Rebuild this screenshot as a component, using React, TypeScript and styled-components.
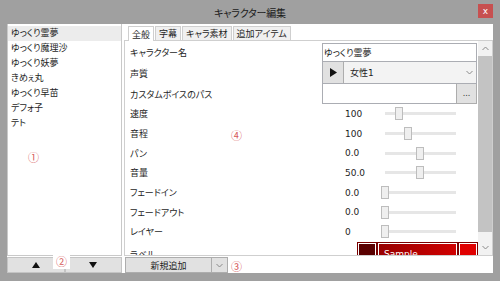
import React from "react";
import styled, { createGlobalStyle } from "styled-components";

const Global = createGlobalStyle`
  html, body { margin: 0; padding: 0; background: #a0a0a0; }
  body {
    font-family: "DejaVu Sans", "Noto Sans CJK JP", sans-serif;
    font-size: 9px;
    color: #1e1e1e;
    font-feature-settings: "palt";
  }
  * { box-sizing: border-box; }
`;

const Window = styled.div`
  position: relative;
  width: 500px;
  height: 281px;
  background: #a0a0a0;
  display: flex;
  flex-direction: column;
  overflow: hidden;
`;

const TitleBar = styled.div`
  height: 24px;
  flex-shrink: 0;
  display: grid;
  grid-template-columns: 1fr auto 1fr;
  align-items: center;
`;

const Title = styled.div`
  grid-column: 2;
  font-family: "Noto Sans CJK JP", sans-serif;
  font-size: 10px;
  color: #1a1a1a;
  letter-spacing: -0.2px;
`;

const CloseButton = styled.div`
  grid-column: 3;
  justify-self: end;
  align-self: start;
  margin: 4px 7px 0 0;
  width: 15px;
  height: 14px;
  background: #c75050;
  color: #fff;
  font-size: 9px;
  line-height: 1;
  display: flex;
  align-items: center;
  justify-content: center;
`;

const Body = styled.div`
  flex: 1;
  min-height: 0;
  margin: 0 7px 8px;
  background: #fff;
  display: flex;
  gap: 2px;
`;

const LeftPanel = styled.div`
  width: 115px;
  display: flex;
  flex-direction: column;
`;

const List = styled.div`
  flex: 1;
  border: 1px solid #c9c9c9;
  border-top: none;
  padding-top: 2px;
`;

const ListItem = styled.div<{ $selected?: boolean }>`
  height: 15px;
  line-height: 15px;
  padding-left: 3px;
  white-space: nowrap;
  background: ${(p) => (p.$selected ? "#ececec" : "transparent")};
`;

const ArrowRow = styled.div`
  height: 17px;
  display: flex;
  padding-top: 1px;
`;

const ArrowButton = styled.div`
  flex: 1;
  background: #e1e1e1;
  border: 1px solid #c4c4c4;
  display: flex;
  align-items: center;
  justify-content: center;
`;

const RightPanel = styled.div`
  flex: 1;
  min-width: 0;
  display: flex;
  flex-direction: column;
`;

const TabStrip = styled.div`
  height: 16px;
  padding: 2px 0 0 4px;
  display: flex;
  align-items: flex-end;
`;

const Tab = styled.div<{ $active?: boolean }>`
  height: ${(p) => (p.$active ? 15 : 14)}px;
  padding: 0 3px;
  margin-right: 1px;
  border: 1px solid #cfcfcf;
  border-bottom: none;
  background: ${(p) => (p.$active ? "#fff" : "#f0f0f0")};
  display: flex;
  align-items: center;
  white-space: nowrap;
  position: relative;
  top: ${(p) => (p.$active ? 1 : 0)}px;
`;

const TabPanel = styled.div`
  flex: 1;
  min-height: 0;
  border: 1px solid #cfcfcf;
  display: flex;
  overflow: hidden;
`;

const Form = styled.div`
  flex: 1;
  min-width: 0;
  padding-top: 2px;
  overflow: hidden;
`;

const Row = styled.div<{ $h: number }>`
  height: ${(p) => p.$h}px;
  display: grid;
  grid-template-columns: 197px 155px;
  align-items: center;
`;

const Label = styled.div`
  padding-left: 5px;
  white-space: nowrap;
`;

const TextBox = styled.div`
  height: 100%;
  border: 1px solid #abadb3;
  display: flex;
  align-items: center;
  padding-left: 1px;
  background: #fff;
`;

const Combo = styled.div`
  height: 100%;
  border: 1px solid #abadb3;
  border-top: none;
  display: flex;
  align-items: stretch;
  background: #f3f3f3;
`;

const PlayButton = styled.div`
  width: 21px;
  background: #e1e1e1;
  border-right: 1px solid #adadad;
  display: flex;
  align-items: center;
  justify-content: center;
`;

const ComboText = styled.div`
  flex: 1;
  display: flex;
  align-items: center;
  padding-left: 6px;
`;

const ComboArrow = styled.div`
  width: 14px;
  display: flex;
  align-items: center;
  justify-content: center;
`;

const PathRow = styled.div`
  height: 100%;
  display: flex;
`;

const PathBox = styled.div`
  flex: 1;
  border: 1px solid #abadb3;
  border-top: none;
  border-right: none;
  background: #fff;
`;

const DotsButton = styled.div`
  width: 21px;
  background: #e1e1e1;
  border: 1px solid #adadad;
  border-top: none;
  display: flex;
  align-items: center;
  justify-content: center;
  font-size: 8px;
  color: #333;
`;

const SliderCell = styled.div`
  display: flex;
  align-items: center;
`;

const Value = styled.div`
  margin-left: 23px;
  width: 36px;
`;

const Slider = styled.div`
  position: relative;
  width: 79px;
  height: 13px;
`;

const Track = styled.div`
  position: absolute;
  left: 4px;
  right: 4px;
  top: 5px;
  height: 3px;
  background: #e6e6e6;
`;

const Thumb = styled.div`
  position: absolute;
  top: 0;
  width: 8px;
  height: 13px;
  background: #efefef;
  border: 1px solid #bdbdbd;
`;

const LastLabel = styled(Label)`
  align-self: start;
  padding-top: 6px;
`;

const ColorCell = styled.div`
  align-self: start;
  margin-top: 1px;
  display: flex;
  gap: 2px;
  padding-left: 36px;
`;

const Swatch = styled.div<{ $w: number; $bg: string }>`
  width: ${(p) => p.$w}px;
  height: 18px;
  background: ${(p) => p.$bg};
  border: 1px solid #fff;
  outline: 1px solid #7a0000;
  color: #fff;
  padding: 5px 0 0 5px;
  font-size: 9px;
`;

const ScrollBar = styled.div`
  width: 14px;
  background: #f2f2f2;
  display: flex;
  flex-direction: column;
`;

const ScrollArrow = styled.div`
  height: 15px;
  display: flex;
  align-items: center;
  justify-content: center;
`;

const ScrollThumb = styled.div`
  height: 176px;
  background: #c3c3c3;
`;

const ScrollSpace = styled.div`
  flex: 1;
`;

const BottomRow = styled.div`
  height: 17px;
  padding: 1px 0 0 1px;
  display: flex;
`;

const AddButton = styled.div`
  width: 87px;
  background: #e1e1e1;
  border: 1px solid #adadad;
  display: flex;
  align-items: center;
  justify-content: center;
`;

const AddDrop = styled.div`
  width: 16px;
  background: #e1e1e1;
  border: 1px solid #adadad;
  border-left: none;
  display: flex;
  align-items: center;
  justify-content: center;
`;

const Annotation = styled.div<{ $bg?: boolean }>`
  position: absolute;
  font-family: "Noto Sans CJK JP", sans-serif;
  font-size: 11px;
  line-height: 1;
  color: #d65a5a;
  background: ${(p) => (p.$bg ? "#fff" : "transparent")};
  padding: ${(p) => (p.$bg ? "2px 3px" : "0")};
`;

const Chevron = ({ up }: { up?: boolean }) => (
  <svg width="7" height="5" viewBox="0 0 7 5">
    <path
      d={up ? "M0.5 4 L3.5 1 L6.5 4" : "M0.5 1 L3.5 4 L6.5 1"}
      stroke="#8a8a8a"
      strokeWidth="1"
      fill="none"
    />
  </svg>
);

const Tri = ({ dir }: { dir: "up" | "down" | "right" }) => {
  const d =
    dir === "up"
      ? "M0 6 L4 0 L8 6 Z"
      : dir === "down"
      ? "M0 0 L8 0 L4 6 Z"
      : "M0 0 L7 4.5 L0 9 Z";
  const w = dir === "right" ? 7 : 8;
  const h = dir === "right" ? 9 : 6;
  return (
    <svg width={w} height={h} viewBox={`0 0 ${w} ${h}`}>
      <path d={d} fill="#111" />
    </svg>
  );
};

const characters = [
  "ゆっくり霊夢",
  "ゆっくり魔理沙",
  "ゆっくり妖夢",
  "きめぇ丸",
  "ゆっくり早苗",
  "デフォ子",
  "テト",
];

const sliders = [
  { label: "速度", value: "100", pos: 14 },
  { label: "音程", value: "100", pos: 23 },
  { label: "パン", value: "0.0", pos: 35 },
  { label: "音量", value: "50.0", pos: 35 },
  { label: "フェードイン", value: "0.0", pos: 0 },
  { label: "フェードアウト", value: "0.0", pos: 0 },
  { label: "レイヤー", value: "0", pos: 0 },
];

export default function App() {
  return (
    <>
      <Global />
      <Window>
        <TitleBar>
          <Title>キャラクター編集</Title>
          <CloseButton>x</CloseButton>
        </TitleBar>
        <Body>
          <LeftPanel>
            <List>
              {characters.map((c, i) => (
                <ListItem key={c} $selected={i === 0}>
                  {c}
                </ListItem>
              ))}
            </List>
            <ArrowRow>
              <ArrowButton>
                <Tri dir="up" />
              </ArrowButton>
              <ArrowButton>
                <Tri dir="down" />
              </ArrowButton>
            </ArrowRow>
          </LeftPanel>
          <RightPanel>
            <TabStrip>
              <Tab $active>全般</Tab>
              <Tab>字幕</Tab>
              <Tab>キャラ素材</Tab>
              <Tab>追加アイテム</Tab>
            </TabStrip>
            <TabPanel>
              <Form>
                <Row $h={19}>
                  <Label>キャラクター名</Label>
                  <TextBox>ゆっくり霊夢</TextBox>
                </Row>
                <Row $h={22}>
                  <Label>声質</Label>
                  <Combo>
                    <PlayButton>
                      <Tri dir="right" />
                    </PlayButton>
                    <ComboText>女性1</ComboText>
                    <ComboArrow>
                      <Chevron />
                    </ComboArrow>
                  </Combo>
                </Row>
                <Row $h={20}>
                  <Label>カスタムボイスのパス</Label>
                  <PathRow>
                    <PathBox />
                    <DotsButton>...</DotsButton>
                  </PathRow>
                </Row>
                {sliders.map((s) => (
                  <Row $h={19.7} key={s.label}>
                    <Label>{s.label}</Label>
                    <SliderCell>
                      <Value>{s.value}</Value>
                      <Slider>
                        <Track />
                        <Thumb style={{ left: s.pos }} />
                      </Slider>
                    </SliderCell>
                  </Row>
                ))}
                <Row $h={24}>
                  <LastLabel>ラベル</LastLabel>
                  <ColorCell>
                    <Swatch $w={18} $bg="#5a0000" />
                    <Swatch
                      $w={79}
                      $bg="linear-gradient(to right, #980000, #d00000)"
                    >
                      Sample
                    </Swatch>
                    <Swatch $w={18} $bg="#e00000" />
                  </ColorCell>
                </Row>
              </Form>
              <ScrollBar>
                <ScrollArrow>
                  <Chevron up />
                </ScrollArrow>
                <ScrollThumb />
                <ScrollSpace />
                <ScrollArrow>
                  <Chevron />
                </ScrollArrow>
              </ScrollBar>
            </TabPanel>
            <BottomRow>
              <AddButton>新規追加</AddButton>
              <AddDrop>
                <Chevron />
              </AddDrop>
            </BottomRow>
          </RightPanel>
        </Body>
        <Annotation style={{ left: 28, top: 152 }}>①</Annotation>
        <Annotation $bg style={{ left: 53, top: 254 }}>
          ②
        </Annotation>
        <Annotation style={{ left: 231, top: 261 }}>③</Annotation>
        <Annotation style={{ left: 231, top: 130 }}>④</Annotation>
      </Window>
    </>
  );
}
